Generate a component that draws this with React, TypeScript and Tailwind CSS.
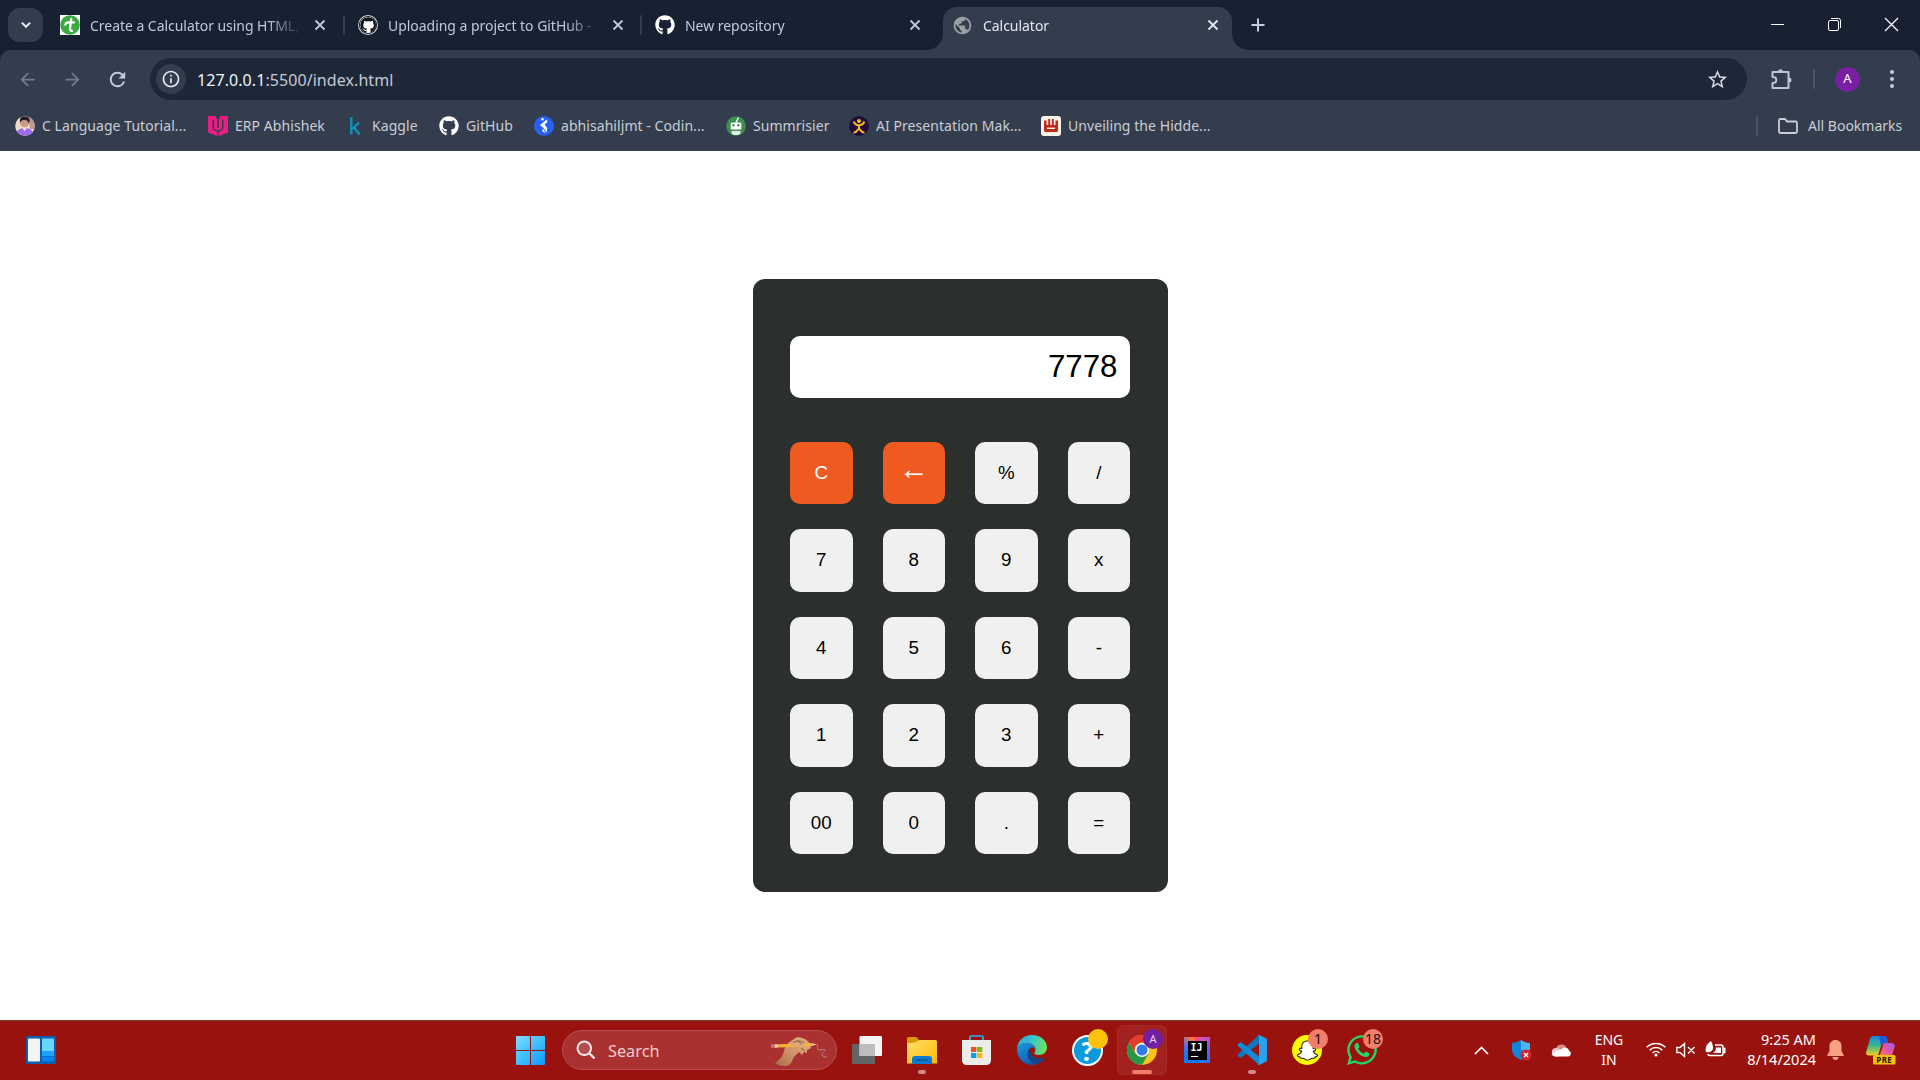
import React from "react";
import { FaGithub, FaWhatsapp, FaSnapchatGhost } from "react-icons/fa";
import { MdPublic, MdRefresh, MdStarBorder, MdArrowBack, MdArrowForward, MdInfoOutline } from "react-icons/md";

const UI = "font-['Noto_Sans',sans-serif]";

function CloseIcon() {
  return (
    <svg viewBox="0 0 16 16" className="size-4 shrink-0" stroke="currentColor" strokeWidth="1.8">
      <path d="M3.5 3.500l9 9M12.500 3.500l-9 9" />
    </svg>
  );
}

function TurboFavicon() {
  return (
    <svg viewBox="0 0 20 20" className="size-5 shrink-0">
      <rect width="20" height="20" fill="#fff" />
      <circle cx="10" cy="10" r="9.8" fill="#3aaa41" />
      <path d="M11.300 3.200L10 13.500q0 3 2.800 2.200M14.800 7.300H8.500Q5.500 7.300 5.200 10.500" fill="none" stroke="#fff" strokeWidth="2.300" />
    </svg>
  );
}

function OctoDark() {
  return (
    <span className="flex size-5 shrink-0 items-center justify-center rounded-full bg-[#d5d8de]">
      <span className="flex size-[18px] items-center justify-center rounded-full bg-[#0d1117]">
        <span className="flex size-4 items-center justify-center overflow-hidden rounded-full bg-white">
          <FaGithub className="size-[17px] shrink-0 text-[#0d1117]" />
        </span>
      </span>
    </span>
  );
}

function Tab({ icon, title, className }: { icon: React.ReactNode; title: string; className: string }) {
  return (
    <div className={`flex shrink-0 items-center text-[#c0c8dc] ${className}`}>
      {icon}
      <span className="ml-2.5 w-[222px] shrink-0">
        <span className="mt-px block w-[212px] text-[14px] leading-5 tracking-[-0.04px] whitespace-nowrap [mask-image:linear-gradient(to_right,#000_178px,transparent_212px)]">
          {title}
        </span>
      </span>
      <CloseIcon />
    </div>
  );
}

function TabStrip() {
  return (
    <div className="flex h-[50px] bg-[#182131]">
      <button className="mt-2 mr-[5px] ml-2 flex h-[34px] w-[35px] shrink-0 items-center justify-center rounded-xl bg-[#343d4d] text-[#e4e8f2]">
        <svg viewBox="0 0 12 12" className="size-3" fill="none" stroke="currentColor" strokeWidth="2">
          <path d="M1.800 3.600L6 7.800l4.200-4.200" />
        </svg>
      </button>
      <Tab className="w-[296px] pl-3" icon={<TurboFavicon />} title="Create a Calculator using HTML," />
      <i className="mt-[15px] h-5 w-0.5 shrink-0 -translate-x-px rounded bg-[#343d4d]" />
      <Tab className="w-[295px] pl-3" icon={<OctoDark />} title="Uploading a project to GitHub -" />
      <i className="mt-[15px] h-5 w-0.5 shrink-0 -translate-x-px rounded bg-[#343d4d]" />
      <Tab className="w-[284px] pl-3" icon={<FaGithub className="size-5 shrink-0 text-white" />} title="New repository" />
      <div className="mt-auto size-4 shrink-0 bg-[radial-gradient(circle_at_0_0,transparent_15.500px,#343d4d_16px)]" />
      <div className="mt-[7px] flex h-[43px] w-[289px] shrink-0 rounded-t-[14px] bg-[#343d4d]">
        <Tab
          className="-mt-[7px] w-[289px] pl-[9px] text-[#e3e7f0]"
          icon={<MdPublic className="size-[21px] shrink-0 text-[#9aa0a6]" />}
          title="Calculator"
        />
      </div>
      <div className="mt-auto size-4 shrink-0 bg-[radial-gradient(circle_at_100%_0,transparent_15.500px,#343d4d_16px)]" />
      <svg viewBox="0 0 14 14" className="mt-[18px] ml-[3px] size-3.5 shrink-0 text-[#c5cce0]" stroke="currentColor" strokeWidth="2">
        <path d="M7 .5v13M.5 7h13" />
      </svg>
      <div className="mt-[17px] mr-[21px] ml-auto flex gap-[42px] text-white">
        <svg viewBox="0 0 15 15" className="size-[15px]" stroke="currentColor">
          <path d="M1 7.500h13" />
        </svg>
        <svg viewBox="0 0 15 15" className="size-[15px]" fill="none" stroke="currentColor">
          <rect x="1.500" y="3.500" width="10" height="10" rx="1.500" />
          <path d="M4 1.500h7.500a2 2 0 0 1 2 2V11" />
        </svg>
        <svg viewBox="0 0 15 15" className="size-[15px]" stroke="currentColor" strokeWidth="1.200">
          <path d="M1 1l13 13M14 1L1 14" />
        </svg>
      </div>
    </div>
  );
}

function Toolbar() {
  return (
    <div className="flex h-[58px] items-center rounded-t-[11px] bg-[#343d4d]">
      <MdArrowBack className="ml-[17px] size-[21px] text-[#747b8b]" />
      <MdArrowForward className="ml-[24px] size-[21px] text-[#747b8b]" />
      <MdRefresh className="ml-[23px] size-[23px] text-[#c5cce0]" />
      <div className="ml-[21px] flex h-[42px] w-[1597px] items-center rounded-full bg-[#1e2737]">
        <span className="ml-1.5 flex size-[30px] items-center justify-center rounded-full bg-[#343d4d]">
          <MdInfoOutline className="size-5 text-[#e3e7f0]" />
        </span>
        <span className="mt-px ml-[11px] text-[16px] tracking-[0.07px] text-[#c3c9d6]">
          <span className="text-[#f0f2f7]">127.0.0.1</span>:5500/index.html
        </span>
        <MdStarBorder className="mr-[18px] ml-auto size-[23px] text-[#d3d8e2]" />
      </div>
      <svg viewBox="0 0 24 24" className="-mt-px ml-[22px] size-6" fill="none" stroke="#bcc5de" strokeWidth="2">
        <path d="M3.500 5h16v16h-16v-5c3 0 3.800-1.300 3.800-3s-.8-3-3.800-3z" strokeLinejoin="round" />
        <path d="M9 4.500a2.500 2.200 0 0 1 5 0zM20 10.500a2.500 2.500 0 0 1 0 5z" fill="#bcc5de" stroke="none" />
      </svg>
      <i className="ml-5 h-5 w-0.5 rounded bg-[#4c5468]" />
      <span className="ml-5 flex size-[25px] items-center justify-center rounded-full bg-[#7b1fa2] text-[13px] text-white">A</span>
      <svg viewBox="0 0 6 20" className="ml-[29px] h-5 w-1.5" fill="#c5cce0">
        <circle cx="3" cy="3" r="2" />
        <circle cx="3" cy="10" r="2" />
        <circle cx="3" cy="17" r="2" />
      </svg>
    </div>
  );
}

function Avatar() {
  return (
    <svg viewBox="0 0 20 20" className="size-5 shrink-0">
      <clipPath id="avatar">
        <circle cx="10" cy="10" r="9.800" />
      </clipPath>
      <g clipPath="url(#avatar)">
        <rect width="20" height="20" fill="#f1dcc8" />
        <path d="M13 0h7v13h-5z" fill="#b99a92" />
        <circle cx="9.500" cy="7" r="4.300" fill="#c99a86" />
        <path d="M5 7C4 1 8-.5 11 .6c4 .4 4.500 4.400 2.500 7C13 4.500 12 3.800 9 4 6.500 4 6 5 5 7z" fill="#251c20" />
        <path d="M1 20c0-6 4-8 9-8s8 2 9 8z" fill="#9c6cf0" />
        <path d="M7.500 12l2 3.500 2.500-3.500z" fill="#e9d9f4" />
      </g>
    </svg>
  );
}

function ErpIcon() {
  return (
    <svg viewBox="0 0 20 20" className="size-5 shrink-0">
      <path d="M0 0h20v16.500L10.600 20v-4.500H9.400V20L0 16.500z" fill="#ec1e86" />
      <path d="M5.200 3.500v8.300q0 2 4.800 3.500 4.800-1.500 4.800-3.500V3.500" fill="none" stroke="#343d4d" strokeWidth="1.500" />
      <path d="M8 0h4v2.500h-1.200V12h-1.600V2.500H8z" fill="#343d4d" />
    </svg>
  );
}

function KaggleIcon() {
  return (
    <svg viewBox="0 0 20 20" className="size-5 shrink-0" fill="none" stroke="#0e93bd" strokeWidth="2.400">
      <path d="M6.300 1v17.500M14 6.500L7.500 13M9 11.500l5.500 7" />
    </svg>
  );
}

function CodingIcon() {
  return (
    <svg viewBox="0 0 20 20" className="size-5 shrink-0">
      <circle cx="10" cy="10" r="10" fill="#2660f5" />
      <circle cx="8.500" cy="3.200" r="1.300" fill="#fff" />
      <path d="M12.800 3.500L13.500 6 10.500 8.500l2.700 3.500-.4 4.500L9.500 12 6 9z" fill="#fff" />
      <path d="M8.800 12.500l3 4.500-3.500-1.500z" fill="#fff" />
    </svg>
  );
}

function RobotIcon() {
  return (
    <svg viewBox="0 0 20 20" className="size-5 shrink-0">
      <circle cx="10" cy="10" r="9.800" fill="#3d9150" />
      <path d="M10 6.500l2.500-5" stroke="#fff" strokeWidth="1.400" />
      <rect x="4.700" y="6.500" width="10.600" height="7" rx="1.200" fill="#fff" />
      <rect x="6.500" y="8.300" width="2" height="2" fill="#2e7340" />
      <rect x="11.300" y="8.300" width="2" height="2" fill="#2e7340" />
      <path d="M5.500 15h9v2.500l-2 1.500h-5l-2-1.500z" fill="#dceee0" />
    </svg>
  );
}

function PresentationIcon() {
  return (
    <svg viewBox="0 0 20 20" className="size-5 shrink-0">
      <circle cx="10" cy="10" r="10" fill="#220d3c" />
      <circle cx="10" cy="5" r="2" fill="#f5b820" />
      <path d="M4.600 5.500C6 8.500 8 9.300 10 9.300s4-.8 5.400-3.800M10 9v3.500M4.500 16.500c2.500.5 3.500-1.500 5.500-4.200 2 2.700 3 4.700 5.500 4.200" fill="none" stroke="#f5b820" strokeWidth="2" />
    </svg>
  );
}

function UnveilingIcon() {
  return (
    <svg viewBox="0 0 20 20" className="size-5 shrink-0">
      <rect width="20" height="20" rx="3" fill="#faf3e8" />
      <path d="M3 4.500h2.500V9h1.700V3h2v6h1.600V3h2v6h1.700V4.500H17v10q0 1.500-1.500 1.500h-11Q3 16 3 14.500z" fill="#c3281d" />
      <path d="M6 12.300h8" stroke="#faf3e8" strokeWidth="1.400" />
    </svg>
  );
}

const bookmarks: { label: string; icon: React.ReactNode; width: string }[] = [
  { label: "C Language Tutorial...", icon: <Avatar />, width: "w-[193px]" },
  { label: "ERP Abhishek", icon: <ErpIcon />, width: "w-[137px]" },
  { label: "Kaggle", icon: <KaggleIcon />, width: "w-[94px]" },
  { label: "GitHub", icon: <FaGithub className="size-5 shrink-0 text-white" />, width: "w-[95px]" },
  { label: "abhisahiljmt - Codin...", icon: <CodingIcon />, width: "w-[192px]" },
  { label: "Summrisier", icon: <RobotIcon />, width: "w-[123px]" },
  { label: "AI Presentation Mak...", icon: <PresentationIcon />, width: "w-[192px]" },
  { label: "Unveiling the Hidde...", icon: <UnveilingIcon />, width: "w-[192px]" },
];

function BookmarksBar() {
  return (
    <div className="flex h-[43px] items-center bg-[#343d4d] pb-[7px] pl-[15px] text-[14px] whitespace-nowrap text-[#c9cdd6]">
      {bookmarks.map((b) => (
        <div key={b.label} className={`flex shrink-0 items-center gap-2 ${b.width}`}>
          {b.icon}
          <span className="-mt-0.5 -ml-px tracking-[0.06px]">{b.label}</span>
        </div>
      ))}
      <i className="ml-auto h-5 w-0.5 rounded bg-[#4c5468]" />
      <svg viewBox="0 0 22 18" className="ml-[19px] h-[18px] w-[22px]" fill="none" stroke="#c9cdd6" strokeWidth="1.800">
        <path d="M2 3.500Q2 2 3.500 2H8l2 2.500h8.500Q20 4.500 20 6v8.500q0 1.500-1.500 1.500h-15Q2 16 2 14.500z" />
      </svg>
      <span className="-mt-0.5 mr-[17px] ml-[9.500px] w-[95px]">All Bookmarks</span>
    </div>
  );
}

const keys = ["C", "←", "%", "/", "7", "8", "9", "x", "4", "5", "6", "-", "1", "2", "3", "+", "00", "0", ".", "="];

function Calculator() {
  return (
    <div className="mt-32 h-[613px] w-[415px] rounded-xl bg-[#2c302c] pt-[57px] pl-[37px] font-['Liberation_Sans',Arial,sans-serif] text-black">
      <div className="flex h-[62px] w-[340px] items-center justify-end rounded-[10px] bg-white pr-3 text-[31.250px]">7778</div>
      <div className="mt-[43.600px] ml-[0.500px] grid w-[340px] grid-cols-4 gap-x-[30px] gap-y-[25px]">
        {keys.map((k, i) => (
          <button
            key={k}
            className={`flex h-[62.500px] items-center justify-center rounded-[10px] ${k === "←" ? "pb-2 text-[30px]" : "text-[18.750px]"} ${i < 2 ? "bg-[#ee5a1f] text-white" : "bg-[#f0f0f0]"}`}
          >
            {k}
          </button>
        ))}
      </div>
    </div>
  );
}

function WidgetsIcon() {
  return (
    <svg viewBox="0 0 30 28" className="h-7 w-[30px]">
      <rect width="30" height="28" rx="1.500" fill="#0d5eae" />
      <rect x="2" y="2.500" width="12" height="23" rx="1" fill="#f3f3f5" />
      <path d="M16 2.500h12V15H16z" fill="#67d5ff" />
      <path d="M16 15h12v5H16z" fill="#1ea2fb" />
      <path d="M16 20.500h12v5H16z" fill="#0583ee" />
    </svg>
  );
}

function StartIcon() {
  return (
    <svg viewBox="0 0 29 29" className="size-[29px]">
      <linearGradient id="start" x1="0" y1="0" x2="1" y2="1">
        <stop offset="0" stopColor="#81dcff" />
        <stop offset=".5" stopColor="#3fc0fd" />
        <stop offset="1" stopColor="#0c94fa" />
      </linearGradient>
      <path d="M0 1q0-1 1-1h13v14H0zM15 0h13q1 0 1 1v13H15zM0 15h14v14H1q-1 0-1-1zM15 15h14v13q0 1-1 1H15z" fill="url(#start)" />
    </svg>
  );
}

function HandIcon() {
  return (
    <svg viewBox="0 0 58 32" className="h-8 w-[58px]">
      <linearGradient id="hand" x1="1" y1="0" x2="0" y2="1">
        <stop offset="0" stopColor="#e6b184" />
        <stop offset=".55" stopColor="#cf9468" />
        <stop offset="1" stopColor="#a96a48" />
      </linearGradient>
      <path d="M5 27c5-3 8-7 9-12 1-6 5-9 10-12 2-2 5-2.500 8-1 3 .5 6 3 8 6l1 4-4 2v3l-3-1-2 3-3-3-3 3c-3 2-3 5-5 8-3 5-12 3-16 0z" fill="url(#hand)" />
      <path d="M4 8.500l37-1.500 1 3-38 1.700z" fill="#f5b33a" />
      <path d="M1 8.600l5-.3v3.200l-5 .2z" fill="#dd6f78" />
      <path d="M5 8.300l2.500-.1v3.200l-2.500.1z" fill="#d9d2d4" />
      <path d="M41 7l6 1.200-5 1.800z" fill="#e9c79a" />
      <path d="M20 9c1-4 6-6 9-5l6 4-2 4-6-2z" fill="#dda77b" />
      <path d="M23 6.500c4-2 8-2 11 0M27 4.500l5 3.500M31 12l4 3" fill="none" stroke="#8f5c3e" strokeWidth="1" />
      <path d="M47 8c2 2-1 6 2 6s5-1 6 0-4 3-3 5 3 2 5 2" fill="none" stroke="#b08488" strokeWidth="1" />
    </svg>
  );
}

function TaskViewIcon() {
  return (
    <svg viewBox="0 0 30 28" className="h-7 w-[30px]">
      <rect y="8" width="23" height="20" rx="1" fill="#646464" />
      <rect x="7.500" y="0" width="22.500" height="20" rx="1" fill="#f4f4f4" />
      <path d="M7.500 8H23v12H8.500q-1 0-1-1z" fill="#bdbdbd" />
    </svg>
  );
}

function ExplorerIcon() {
  return (
    <svg viewBox="0 0 30 27" className="h-[27px] w-[30px]">
      <linearGradient id="folder" x1="0" y1="0" x2="1" y2="1">
        <stop offset="0" stopColor="#ffdf70" />
        <stop offset="1" stopColor="#ffb900" />
      </linearGradient>
      <path d="M0 1.500Q0 0 1.500 0h8l3 3.500V8H0z" fill="#dd9a00" />
      <path d="M0 6q4 0 8-.5 3-2.500 5-2.500h15.500Q30 3 30 4.500v22H0z" fill="url(#folder)" />
      <path d="M5 27v-5q0-3 3-3h14q3 0 3 3v5z" fill="#0f79cf" />
      <path d="M9 23h12" stroke="#084f93" strokeWidth="1.300" />
    </svg>
  );
}

function StoreIcon() {
  return (
    <svg viewBox="0 0 29 30" className="mr-px h-[30px] w-[29px]">
      <path d="M8 6V2.500Q8 1 9.500 1h10Q21 1 21 2.500V6" fill="none" stroke="#27b4ee" strokeWidth="1.700" />
      <path d="M0 5h29v20q0 5-5 5H5q-5 0-5-5z" fill="#ececec" />
      <path d="M9 12h5.300v5H9z" fill="#f25022" />
      <path d="M15 12h5.300v5H15z" fill="#7fba00" />
      <path d="M9 18h5.300v5H9z" fill="#00a4ef" />
      <path d="M15 18h5.300v5H15z" fill="#ffb900" />
    </svg>
  );
}

function EdgeIcon() {
  return (
    <svg viewBox="0 0 30 30" className="size-[30px]">
      <linearGradient id="edgeTop" x1="0" y1=".3" x2="1" y2=".5">
        <stop offset="0" stopColor="#2aa9e0" />
        <stop offset=".5" stopColor="#36c6ce" />
        <stop offset="1" stopColor="#6fe353" />
      </linearGradient>
      <linearGradient id="edgeLow" x1="0" y1="0" x2=".6" y2="1">
        <stop offset="0" stopColor="#1d9ce0" />
        <stop offset="1" stopColor="#0d5bb0" />
      </linearGradient>
      <path d="M0 14C0 6 7 0 15 0c9 0 15 6 15 12.500C30 17 26.500 20 22 20c-4 0-5-1.300-4.500-2.500 1.500-1.500 1.500-5-1-7C11 6 2 8 0 14z" fill="url(#edgeTop)" />
      <path d="M0 14c2-5.500 8-7 13-5.500 3 1 5 3.500 5 6-1-2-3-2.500-4.500-1.500C8 17 11 27 19 29.400 8 32 0 24 0 14z" fill="url(#edgeLow)" />
      <path d="M12 14c-3 5 0 13.500 7 15.400 4-1 7-3.500 8.700-6.400.3-.6-.2-1-.9-.6C21 25 14 23 12 14z" fill="#11478c" />
    </svg>
  );
}

function HelpIcon() {
  return (
    <span className="flex size-[31px] items-center justify-center rounded-full border-2 border-white bg-[#0b9bdc] font-['Lato',sans-serif] text-[27px] leading-none font-black text-white">
      ?
    </span>
  );
}

function ChromeIcon() {
  return (
    <svg viewBox="0 0 30 30" className="size-[30px]">
      <circle cx="15" cy="15" r="15" fill="#fbc116" />
      <path d="M2 7.500A15 15 0 0 0 15 30l6.500-11.300L15 15 8.500 18.700z" fill="#279847" />
      <path d="M2 7.500A15 15 0 0 1 28 7.500H15A7.500 7.500 0 0 0 8.500 18.700z" fill="#e33b2e" />
      <circle cx="15" cy="15" r="7" fill="#fff" />
      <circle cx="15" cy="15" r="5.500" fill="#2f7bea" />
    </svg>
  );
}

function IntellijIcon() {
  return (
    <span className="flex size-[26px] items-center justify-center bg-[conic-gradient(from_20deg,#d94fb0,#6b57ff_20%,#087cfa_40%,#087cfa_65%,#5b6cf0_75%,#ff7a30_88%,#fc3f7e_94%,#d94fb0)]">
      <span className="flex size-[19px] flex-col bg-black pt-0.5 pl-[3px] text-white">
        <span className="font-['DejaVu_Sans_Mono',monospace] text-[10px] leading-[10px] font-bold">IJ</span>
        <i className="mt-[3px] h-[1.500px] w-[7px] bg-white" />
      </span>
    </span>
  );
}

function CodeIcon() {
  return (
    <svg viewBox="0 0 30 30" className="size-[30px]">
      <path d="M22 0L1 19q-1 1 0 2l1.700 1.500q.8.600 1.700 0L22 8.500z" fill="#0b77be" />
      <path d="M22 30L1 11q-1-1 0-2l1.700-1.500q.8-.6 1.700 0L22 21.500z" fill="#0e8bd6" />
      <path d="M22 0l7 3.300q1 .5 1 1.700v20q0 1.200-1 1.700L22 30q-1 0-1.500-.8.900.3 1.500-.7V1.500Q21.400.6 20.500.8 21 0 22 0z" fill="#27a3ee" />
    </svg>
  );
}

function SnapIcon() {
  return (
    <span className="flex size-[30px] items-center justify-center rounded-full bg-[#fffc00]">
      <FaSnapchatGhost className="size-[19px] overflow-visible text-white [paint-order:stroke] [stroke-width:60px] [stroke:#222]" />
    </span>
  );
}

function CountBadge({ children }: { children: React.ReactNode }) {
  return (
    <span className="absolute top-1 left-[26px] flex h-5 min-w-5 items-center justify-center rounded-full bg-[#f27d68] px-0.5 text-[14px] leading-none text-[#2d0806]">
      {children}
    </span>
  );
}

function Slot({ children, className = "" }: { children: React.ReactNode; className?: string }) {
  return <div className={`relative mr-[5px] flex size-[50px] shrink-0 items-center justify-center ${className}`}>{children}</div>;
}

function RunningDot() {
  return <i className="absolute bottom-px left-[21px] h-1 w-2 rounded-full bg-[#d38a8c]" />;
}

function CopilotIcon() {
  return (
    <svg viewBox="0 0 30 29" className="h-[29px] w-[30px]">
      <linearGradient id="copA" x1="0" y1="0" x2="0" y2="1">
        <stop offset="0" stopColor="#1687e8" />
        <stop offset=".5" stopColor="#39b98d" />
        <stop offset="1" stopColor="#f0cf20" />
      </linearGradient>
      <linearGradient id="copB" x1="0" y1="1" x2="1" y2="0">
        <stop offset="0" stopColor="#f4804c" />
        <stop offset=".5" stopColor="#e254a8" />
        <stop offset="1" stopColor="#9a5cf0" />
      </linearGradient>
      <path d="M8 0h10q2.500 0 3 2.500L22 7h-4q-2 0-3 3l-2.500 8q-.6 1.500-2.500 1.500H3q-4 0-2.700-4L4 3Q5 0 8 0z" fill="url(#copA)" />
      <path d="M13 0h5q2.500 0 3 2.500L22 7h-4q-2 0-3 3z" fill="#1a5fd8" />
      <path d="M18 7h7q4.500 0 3.500 4L26 20H13.500l3.300-10Q17.500 7 18 7z" fill="url(#copB)" />
      <rect x="7" y="19" width="22.500" height="9.500" rx="1.500" fill="#f6c30c" />
      <text x="18.300" y="26.700" textAnchor="middle" fontSize="8" fontWeight="700" fontFamily="Noto Sans" letterSpacing=".4" fill="#1b1500">
        PRE
      </text>
    </svg>
  );
}

function Taskbar() {
  return (
    <div className="flex h-[60px] items-center border-t border-[#8c3a36] bg-[#99120e] pb-px text-white">
      <div className="ml-[26px] w-[490px]">
        <WidgetsIcon />
      </div>
      <StartIcon />
      <div className="mr-[5px] ml-[17px] flex h-10 w-[275px] shrink-0 items-center rounded-full border border-[#b9504d] bg-[#a93230]">
        <svg viewBox="0 0 20 20" className="ml-[13px] size-5" fill="none" stroke="#f2e9ea" strokeWidth="2">
          <circle cx="8.300" cy="8.300" r="6.800" fill="#ffffff22" />
          <path d="M13 13l5.500 5.500" strokeWidth="2.400" />
        </svg>
        <span className="mt-0.5 ml-3 text-[16.300px] text-[#f0cfcf]">Search</span>
        <span className="mt-1 mr-[8px] ml-auto">
          <HandIcon />
        </span>
      </div>
      <Slot><TaskViewIcon /></Slot>
      <Slot>
        <ExplorerIcon />
        <RunningDot />
      </Slot>
      <Slot><StoreIcon /></Slot>
      <Slot><EdgeIcon /></Slot>
      <Slot>
        <HelpIcon />
        <i className="absolute top-1 right-1 size-5 rounded-full bg-[#ffc20a]" />
      </Slot>
      <Slot className="rounded-md border border-[#a62b28] bg-[#a3211f]">
        <ChromeIcon />
        <span className="absolute top-[3px] right-[3px] flex size-5 items-center justify-center rounded-full bg-[#7020a0] text-[11px] text-[#e5cdf0]">A</span>
        <i className="absolute bottom-0 left-[14px] h-1 w-5 rounded-full bg-[#f27d68]" />
      </Slot>
      <Slot><IntellijIcon /></Slot>
      <Slot>
        <CodeIcon />
        <RunningDot />
      </Slot>
      <Slot>
        <SnapIcon />
        <CountBadge>1</CountBadge>
      </Slot>
      <Slot>
        <FaWhatsapp className="size-[34px] text-[#25d366]" />
        <CountBadge>18</CountBadge>
      </Slot>

      <div className="ml-auto flex shrink-0 items-center">
        <svg viewBox="0 0 15 9" className="h-[9px] w-[15px]" fill="none" stroke="#fff" strokeWidth="1.700">
          <path d="M1 8l6.500-6.500L14 8" />
        </svg>
        <svg viewBox="0 0 20 21" className="ml-[23px] h-[21px] w-5">
          <path d="M9 0q4 3 9 3v7q0 6-9 10Q0 16 0 10V3q5 0 9-3z" fill="#1583d8" />
          <path d="M9 0q4 3 9 3v7H9z" fill="#4bb4ee" />
          <circle cx="14" cy="15" r="5.500" fill="#d8232f" />
          <path d="M12 13l4 4M16 13l-4 4" stroke="#fff" strokeWidth="1.300" />
        </svg>
        <svg viewBox="0 0 20 14" className="ml-[19px] h-3.5 w-5">
          <path d="M5 6a5.500 5.500 0 0 1 10.500-1L9 9z" fill="#d98d8a" />
          <path d="M4.500 13.500a4.300 4.300 0 0 1 0-8.500q2.500-.3 4.500 1.500l8 6z" fill="#f0d0d0" />
          <path d="M4.500 13.500q-2.500 0-4-2.500l11-5.500q2-1.500 4.300-.5c1.500.5 2.200 2 2.200 2.700 2.500.8 2.800 5-1 5.800z" fill="#fff" />
        </svg>
        <div className="ml-[20px] w-9 text-center text-[14px] leading-5">
          <div>ENG</div>
          <div>IN</div>
        </div>
        <svg viewBox="0 0 20 16" className="-mt-0.5 ml-[19px] h-4 w-5" fill="none" stroke="#fff" strokeWidth="1.500">
          <path d="M.7 6.300a13 13 0 0 1 18.600 0M3.600 9.200a9 9 0 0 1 12.800 0M6.500 12a5 5 0 0 1 7 0" />
          <circle cx="10" cy="14" r="1.600" fill="#fff" stroke="none" />
        </svg>
        <svg viewBox="0 0 20 16" className="ml-[10px] h-4 w-5" fill="none" stroke="#fff" strokeWidth="1.400">
          <path d="M.8 5.500H4l4.500-4v13l-4.500-4H.8zM12 5l6.500 6.500M18.500 5L12 11.500" />
        </svg>
        <svg viewBox="0 0 21 17" className="-mt-1 ml-[9px] h-[17px] w-[21px]" fill="none" stroke="#fff" strokeWidth="1.500">
          <path d="M10 5h6q2 0 2 2v6.500q0 2-2 2H5q-2 0-2-1.500M18.500 8.500h1.300v4h-1.300" />
          <path d="M1 12Q-1 6 6 1q3 5 1.500 9Q5.500 13 1 12z" fill="#fff" stroke="none" />
          <path d="M11 7.500h5v5.500H8q3-2 3-5.500z" fill="#fff" stroke="none" />
        </svg>
        <div className="-mt-0.5 ml-[16px] w-[74px] text-right text-[14.500px] leading-5 whitespace-nowrap">
          <div>9:25 AM</div>
          <div>8/14/2024</div>
        </div>
        <svg viewBox="0 0 17 20" className="ml-[11px] h-5 w-[17px]" fill="#f9a182">
          <path d="M8.500 0C12 0 14.500 2.500 14.500 6v5l2.300 4.200q.2.800-.6.800H.8q-.8 0-.6-.8L2.500 11V6c0-3.500 2.500-6 6-6zM5.500 17h6a3 3 0 0 1-6 0z" />
        </svg>
        <div className="mr-6 ml-[22px]">
          <CopilotIcon />
        </div>
      </div>
    </div>
  );
}

export default function App() {
  return (
    <div className={`flex h-[1080px] w-[1920px] flex-col overflow-hidden bg-[#182131] ${UI}`}>
      <TabStrip />
      <Toolbar />
      <BookmarksBar />
      <main className="flex flex-1 justify-center bg-white">
        <Calculator />
      </main>
      <Taskbar />
    </div>
  );
}
